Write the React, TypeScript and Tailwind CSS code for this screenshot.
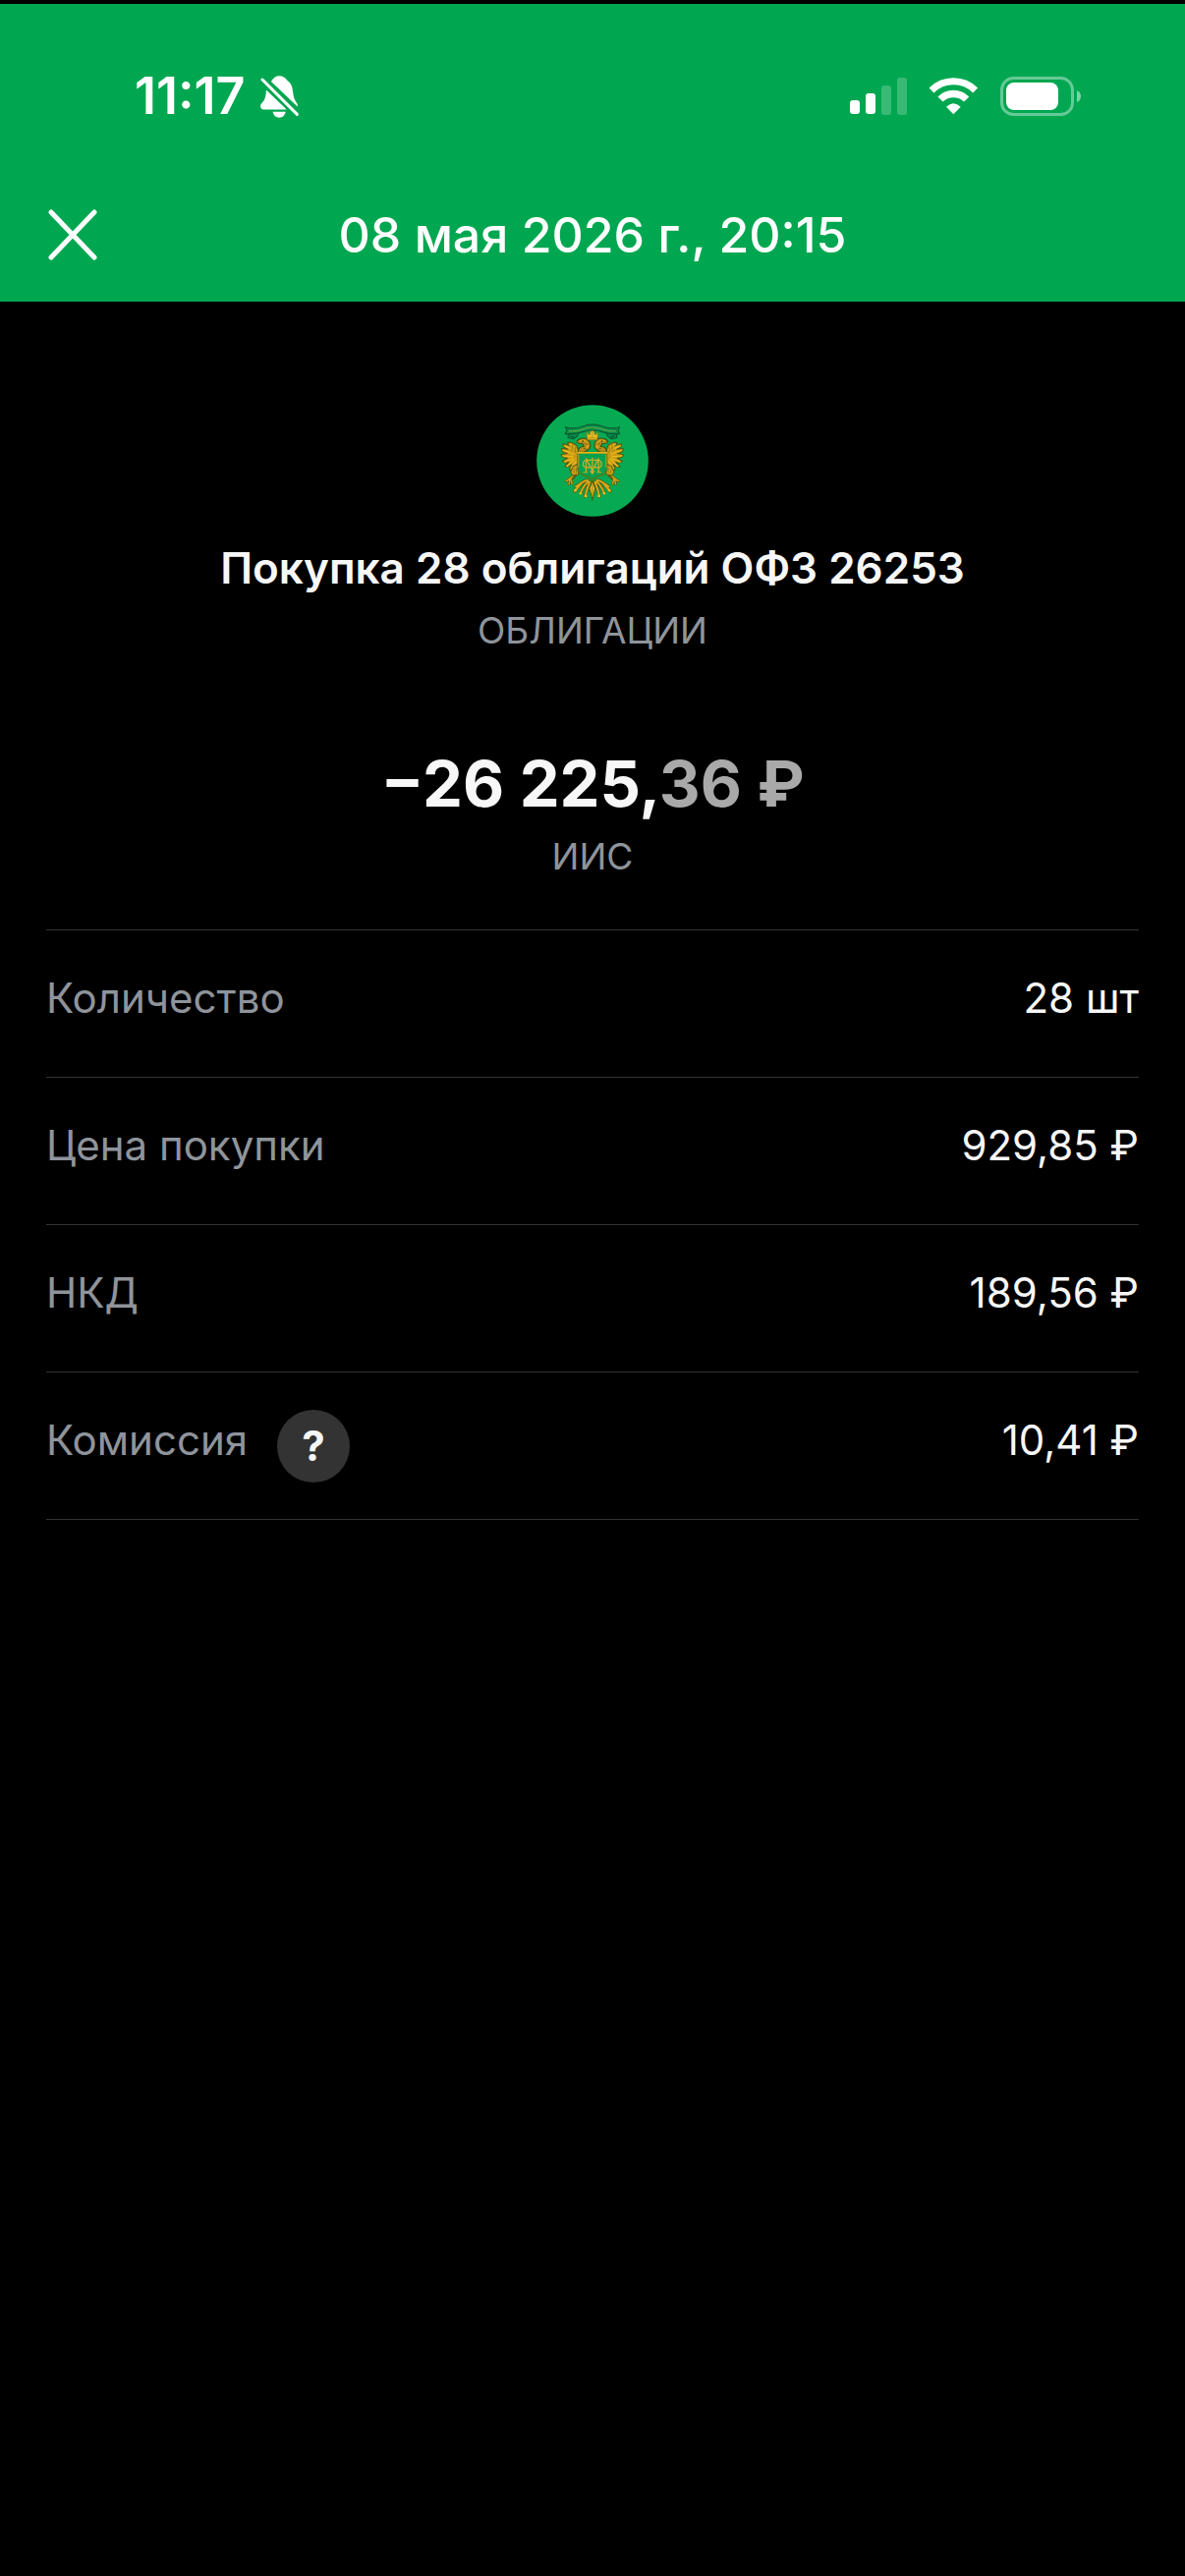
const details = [
  { label: "Количество", value: "28 шт" },
  { label: "Цена покупки", value: "929,85 ₽" },
  { label: "НКД", value: "189,56 ₽" },
  { label: "Комиссия", value: "10,41 ₽", hint: true },
];

function BellOffIcon() {
  return (
    <svg className="w-[39px] h-[43px]" viewBox="494 80 118 130" fill="white" aria-hidden="true">
      <path d="M527 98 Q537 81 552 81 Q567 81 577 95 Q592 104 594 128 Q596 150 603 159 Q609 166 609 176 Z" />
      <path d="M512 124 L575 184 L503 184 Q494 183 494 174 Q494 167 502 160 Q511 152 512 124 Z" />
      <path d="M532 191 H572 Q568 209 552 209 Q536 209 532 191 Z" />
      <path d="M500 92 L607 199" stroke="#00a750" strokeWidth="20" />
      <path d="M500 92 L607 199" stroke="white" strokeWidth="9" strokeLinecap="round" />
    </svg>
  );
}

function SignalIcon() {
  return (
    <svg className="w-[58px] h-[38px]" viewBox="0 0 58 38" fill="white" aria-hidden="true">
      <rect x="0" y="23" width="10" height="14" rx="3" />
      <rect x="16" y="16" width="10" height="21" rx="3" />
      <rect x="32" y="8" width="10" height="30" rx="3" opacity="0.22" />
      <rect x="48" y="0" width="10" height="38" rx="3" opacity="0.22" />
    </svg>
  );
}

function WifiIcon() {
  return (
    <svg className="w-[51px] h-[38px]" viewBox="315 86 153 114" fill="none" aria-hidden="true">
      <path d="M324 125 A95 95 0 0 1 458 125" stroke="white" strokeWidth="21" />
      <path d="M351 152 A57 57 0 0 1 431 152" stroke="white" strokeWidth="22" />
      <path d="M391 198 L369 175 Q391 154 413 175 Z" fill="white" />
    </svg>
  );
}

function BatteryIcon() {
  return (
    <svg className="w-[83px] h-[40px]" viewBox="0 0 83 40" fill="none" aria-hidden="true">
      <rect x="1.5" y="1.5" width="72" height="37" rx="12" stroke="white" strokeOpacity="0.4" strokeWidth="3" />
      <rect x="6" y="6" width="53" height="28" rx="8" fill="white" />
      <path d="M78 14 Q82 16 82 20 Q82 24 78 26 Z" fill="white" fillOpacity="0.5" />
    </svg>
  );
}

// left half of the eagle, mirrored for the right half
function EagleHalf() {
  return (
    <g strokeLinejoin="round" strokeLinecap="round">
      {/* wing */}
      <g fill="#c99a15" stroke="#4d5a12" strokeWidth="3">
        <path d="M180 184 L172 160 Q156 146 144 152 L152 160 L130 155 Q130 166 146 171 L126 169 Q126 182 144 184 L125 188 Q128 199 145 198 L129 208 Q134 216 149 210 L136 224 Q144 230 156 218 L150 234 Q163 236 170 220 L180 214 Z" />
      </g>
      <g fill="none" stroke="#edb91b" strokeWidth="4">
        <path d="M150 157 Q164 160 170 174" />
        <path d="M135 161 Q152 166 164 180" />
        <path d="M131 175 Q148 180 162 187" />
        <path d="M131 192 Q148 194 160 193" />
        <path d="M136 210 Q150 205 161 199" />
        <path d="M143 223 Q154 213 165 203" />
        <path d="M155 230 Q163 219 171 208" />
      </g>
      <path d="M160 158 V170 M168 165 V180 M153 172 L162 178" stroke="#6b6410" strokeWidth="2" fill="none" />
      {/* neck and head */}
      <path d="M176 180 Q178 162 195 163 L190 154 Q178 156 172 149 Q176 140 187 139 Q202 134 211 149 Q217 160 211 169 Q206 177 194 180 Z" fill="#b88d17" stroke="#3f4c12" strokeWidth="3" />
      <path d="M183 146 Q194 140 204 152 Q209 160 203 168" fill="none" stroke="#e3b220" strokeWidth="3" />
      <circle cx="191" cy="147" r="2.4" fill="#30400f" />
      <path d="M198 154 L207 157 M194 169 L204 172" stroke="#4d5a12" strokeWidth="2" />
      {/* leg and claw */}
      <path d="M162 222 L154 241 L160 252 L176 249 L181 235 L176 219 Z" fill="#d3a219" stroke="#5c5c12" strokeWidth="3" />
      <path d="M164 230 V244 M171 228 V245" stroke="#77700f" strokeWidth="2" />
      <path d="M160 254 L145 266 M148 264 L140 268 M154 260 L158 276 M152 261 L149 278 M168 252 L158 262" fill="none" stroke="#5c5c12" strokeWidth="8" />
      <path d="M160 254 L145 266 M148 264 L140 268 M154 260 L158 276 M152 261 L149 278" fill="none" stroke="#d3a219" strokeWidth="4" />
      {/* tail */}
      <g fill="none" stroke="#4d5a12" strokeWidth="10">
        <path d="M205 266 Q190 267 181 282 L166 299 M208 270 Q194 279 184 305 M212 272 Q204 290 198 315 M190 272 L170 285" />
      </g>
      <g fill="none" stroke="#d9a81a" strokeWidth="6">
        <path d="M205 266 Q190 267 181 282 L166 299 M208 270 Q194 279 184 305 M212 272 Q204 290 198 315 M190 272 L170 285" />
      </g>
      <circle cx="169" cy="296" r="4" fill="#f2c221" />
      <circle cx="184" cy="306" r="4" fill="#f2c221" />
      <circle cx="200" cy="314" r="4" fill="#f2c221" />
    </g>
  );
}

function EmblemIcon() {
  return (
    <svg className="size-[114px]" viewBox="50 36 341 341" role="img" aria-label="ОФЗ">
      <circle cx="220.500" cy="206.500" r="170" fill="#07aa52" />
      <EagleHalf />
      <g transform="matrix(-1 0 0 1 440 0)">
        <EagleHalf />
      </g>
      <path d="M220 267 L211 291 L220 325 L229 291 Z" fill="#edb91b" stroke="#4d5a12" strokeWidth="3" />
      <path d="M220 276 V316" stroke="#856f10" strokeWidth="2" />
      {/* ribbon */}
      <g fill="#078b46" stroke="#0b5433" strokeWidth="3" strokeLinejoin="round">
        <path d="M147 121 L146 136 L162 140 L174 132 L179 120 Z" />
        <path d="M293 121 L295 136 L279 140 L267 132 L261 120 Z" />
        <path d="M137 103 L147 106 Q174 109 195 100 Q220 92 246 100 Q270 109 296 106 L303 103 L299 114 L303 125 Q273 127 247 118 Q220 109 194 118 Q168 127 137 125 L143 113 Z" />
      </g>
      <path d="M149 116 Q174 118 195 109 Q220 101 246 109 Q270 118 292 116" fill="none" stroke="#77b84e" strokeWidth="4" strokeDasharray="4 2" />
      <path d="M153 132 L164 135 M287 132 L276 135" stroke="#0b5433" strokeWidth="3" />
      {/* crown */}
      <path d="M202 119 L211 128 L215 116 H225 L229 128 L238 119 L235 143 H205 Z" fill="#efbc1c" stroke="#756a12" strokeWidth="2" />
      <path d="M208 137 H232 M220 120 V134" stroke="#957911" strokeWidth="2" />
      {/* shield */}
      <path d="M176 182 H264 V235 Q260 249 238 253 L220 264 L202 253 Q180 249 176 235 Z" fill="#07a14e" stroke="#4e7d20" strokeWidth="5" />
      <path d="M174 182 H266" stroke="#e9b51b" strokeWidth="5" />
      <path d="M178 186 V226 M262 186 V226" stroke="#bda021" strokeWidth="3" />
      {/* monogram */}
      <g fill="none" stroke="#c9ae26" strokeWidth="4" strokeLinecap="round" strokeLinejoin="round">
        <path d="M201 240 V200 L220 236 L239 200 V240" />
        <path d="M220 198 V246 M215 238 L220 246 L225 238" />
        <path d="M213 205 Q192 201 192 216 Q192 231 213 226" />
        <path d="M227 205 Q248 201 248 216 Q248 231 227 226" />
        <path d="M213 204 H227 M193 242 H205 M235 242 H247" strokeWidth="3" />
      </g>
    </svg>
  );
}

function StatusBar() {
  return (
    <div className="flex items-center justify-between pl-[137px] pr-[105px] h-[188px]">
      <div className="flex items-center gap-[15px]">
        <span className="text-[52px] leading-[60px] font-semibold">11:17</span>
        <BellOffIcon />
      </div>
      <div className="flex items-center gap-[22px]">
        <SignalIcon />
        <WifiIcon />
        <BatteryIcon />
      </div>
    </div>
  );
}

export default function App() {
  return (
    <div className="min-h-screen bg-black pt-1 text-[#f7f7f7] font-['Inter',sans-serif]">
      <header className="bg-[#00a750] text-white">
        <StatusBar />
        <div className="grid grid-cols-[72px_1fr_72px] items-center px-9 h-[115px] pb-[22px]">
          <button type="button" aria-label="Закрыть" className="flex size-[75px] items-center justify-center">
            <svg className="w-[50px] h-[52px]" viewBox="0 0 50 52" fill="none" stroke="white" strokeWidth="5" strokeLinecap="round">
              <path d="M3 3 L47 49 M47 3 L3 49" />
            </svg>
          </button>
          <h1 className="text-center text-[50px] leading-[60px] font-medium">08 мая 2026 г., 20:15</h1>
        </div>
      </header>

      <main className="px-[47px] pt-[105px]">
        <section className="flex flex-col items-center text-center">
          <EmblemIcon />
          <h2 className="mt-6 text-[44px] leading-[56px] font-semibold">Покупка 28 облигаций ОФЗ 26253</h2>
          <p className="mt-2 text-[37px] leading-[56px] text-[#8f949b]">ОБЛИГАЦИИ</p>
          <p className="mt-[86px] text-[65px] leading-[84px] font-bold">
            −26 225,<span className="text-[#a9a9a9]">36 ₽</span>
          </p>
          <p className="mt-1 text-[37px] leading-[56px] text-[#8f949b]">ИИС</p>
        </section>

        <dl className="mt-[46px] border-t border-[#333333]">
          {details.map((item) => (
            <div
              key={item.label}
              className="flex h-[150px] items-center justify-between border-b border-[#333333] text-[42px] leading-[56px]"
            >
              <dt className="flex items-center gap-[30px] text-[#8f949b]">
                <span className="pb-3">{item.label}</span>
                {item.hint && (
                  <button
                    type="button"
                    aria-label="О комиссии"
                    className="size-[74px] rounded-full bg-[#333333] text-[42px] leading-[56px] font-bold text-[#f7f7f7]"
                  >
                    ?
                  </button>
                )}
              </dt>
              <dd className="pb-3">{item.value}</dd>
            </div>
          ))}
        </dl>
      </main>
    </div>
  );
}
